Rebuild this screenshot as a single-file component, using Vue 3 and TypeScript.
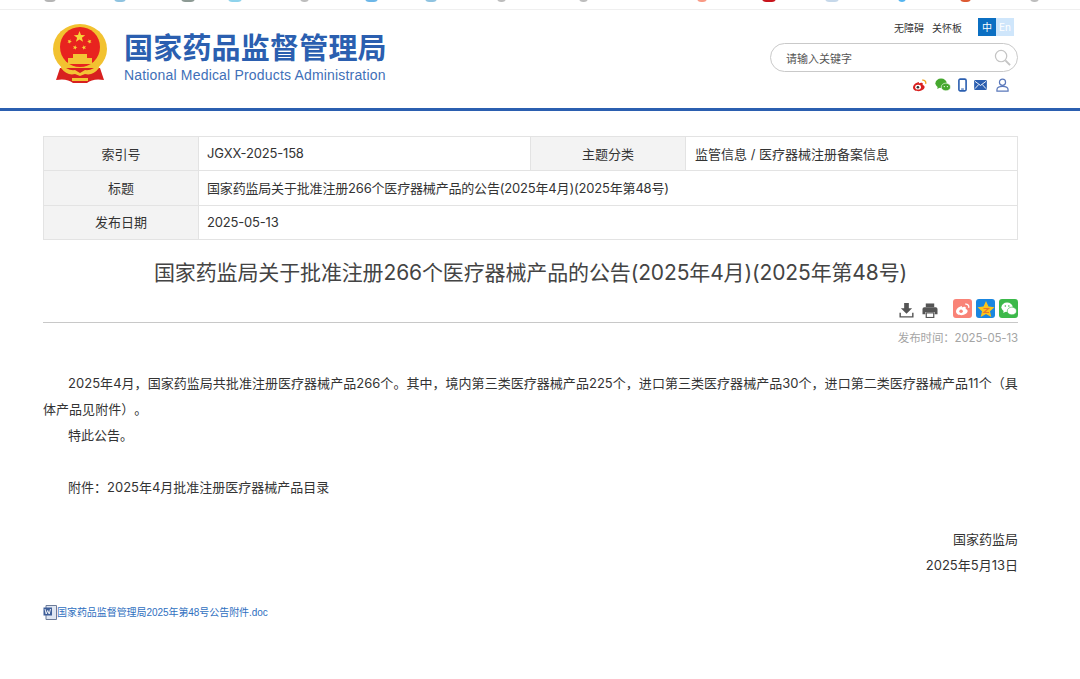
<script setup lang="ts">
const metaRows = [
  { label: '索引号', value: 'JGXX-2025-158', label2: '主题分类', value2: '监管信息 / 医疗器械注册备案信息' },
  { label: '标题', value: '国家药监局关于批准注册266个医疗器械产品的公告(2025年4月)(2025年第48号)' },
  { label: '发布日期', value: '2025-05-13' },
]

// bits of the icon row cut off by the top of the capture
const stripIcons = [
  { x: 44, w: 12, c: '#b5b5b5' }, { x: 114, w: 12, c: '#8fc3e0' }, { x: 181, w: 14, c: '#8d9a94' },
  { x: 228, w: 14, c: '#8fd3ec' }, { x: 300, w: 9, c: '#bdbdbd' }, { x: 365, w: 13, c: '#6db7e8' },
  { x: 425, w: 12, c: '#8fc3e0' }, { x: 497, w: 9, c: '#bdbdbd' }, { x: 579, w: 9, c: '#bdbdbd' },
  { x: 697, w: 10, c: '#f99a85' }, { x: 762, w: 14, c: '#c8141c' }, { x: 825, w: 14, c: '#c6d8ea' },
  { x: 898, w: 8, c: '#55b5f0' }, { x: 960, w: 11, c: '#dd5a33' }, { x: 1030, w: 9, c: '#bdbdbd' },
]

function star(cx: number, cy: number, r: number, rot = 0) {
  const pts: string[] = []
  for (let i = 0; i < 10; i++) {
    const rad = i % 2 ? r * 0.42 : r
    const a = -Math.PI / 2 + rot + (i * Math.PI) / 5
    pts.push(`${(cx + rad * Math.cos(a)).toFixed(2)},${(cy + rad * Math.sin(a)).toFixed(2)}`)
  }
  return pts.join(' ')
}

const emblemStars = [
  star(26.5, 13, 6),
  star(16.5, 17.5, 2.4, 0.4),
  star(36.5, 17.5, 2.4, -0.4),
  star(22, 23.5, 2.4, 0.2),
  star(31, 23.5, 2.4, -0.2),
]
</script>

<template>
  <div class="page">
    <div class="strip">
      <i
        v-for="s in stripIcons"
        :key="s.x"
        class="strip-dot"
        :style="{ left: s.x + 'px', width: s.w + 'px', background: s.c }"
      ></i>
    </div>

    <header class="header">
      <div class="brand">
        <svg class="emblem" viewBox="0 0 54 60" width="54" height="60">
          <ellipse cx="27" cy="25" rx="27" ry="25" fill="#f2c230" />
          <path d="M7 44 L3 56 Q14 54 20 59 L34 59 Q40 54 51 56 L47 44 Z" fill="#d8201f" />
          <circle cx="27" cy="23" r="20" fill="#e8231f" />
          <polygon v-for="p in emblemStars" :key="p" :points="p" fill="#f7d53a" />
          <path d="M20 30 H34 V34 H39 V40 H15 V34 H20 Z" fill="#f3c435" />
          <path d="M9 40 Q14 47 22 46 L27 49 L32 46 Q40 47 45 40 L46 44 Q40 52 32 50 L27 52 L22 50 Q14 52 8 44 Z" fill="#f3c435" />
          <rect x="19" y="54" width="16" height="3" fill="#f3c435" />
        </svg>
        <div class="brand-text">
          <div class="brand-cn">国家药品监督管理局</div>
          <div class="brand-en">National Medical Products Administration</div>
        </div>
      </div>

      <div class="tools">
        <div class="tools-top">
          <span>无障碍</span>
          <span>关怀板</span>
          <div class="lang"><b class="on">中</b><b class="off">En</b></div>
        </div>
        <div class="search">
          <span>请输入关键字</span>
          <svg viewBox="0 0 18 18" width="17" height="17">
            <circle cx="7.5" cy="7.5" r="6" fill="none" stroke="#c4c4c4" stroke-width="1.3" />
            <path d="M12 12 L17 17" stroke="#c4c4c4" stroke-width="2" />
          </svg>
        </div>
        <div class="links">
          <svg viewBox="0 0 18 16" width="16" height="14">
            <path d="M7.500 4.500C3.500 5.500 1 8.500 1 10.800 1 13.500 4 15 7.300 15c3.800 0 7-2 7-4.600 0-1.600-1.500-2-2.300-2.300.5-1.200.3-2.300-1-2.600-1.100-.2-2.400.3-3.300.7.300-1.100-.200-2-.200-1.700z" fill="#d9201f" />
            <ellipse cx="6.800" cy="10.500" rx="3.300" ry="2.700" fill="#fff" />
            <circle cx="6.600" cy="10.600" r="1.500" fill="#333" />
            <path d="M11.500 2.500c2.600-.6 4.800 1.600 4 4.200" fill="none" stroke="#f2a51f" stroke-width="1.500" />
          </svg>
          <svg viewBox="0 0 18 16" width="16" height="14">
            <ellipse cx="6.800" cy="6" rx="6.500" ry="5.300" fill="#46a82f" />
            <path d="M3 9 L2.500 12.500 L6 10.500 Z" fill="#46a82f" />
            <ellipse cx="12.300" cy="10.300" rx="5.300" ry="4.400" fill="#46a82f" stroke="#fff" stroke-width=".7" />
            <circle cx="10.500" cy="9.800" r=".7" fill="#fff" />
            <circle cx="14" cy="9.800" r=".7" fill="#fff" />
          </svg>
          <svg viewBox="0 0 10 15" width="9" height="14">
            <rect x="1" y="1" width="8" height="13" rx="1.500" fill="#fff" stroke="#2b5fb0" stroke-width="1.800" />
            <rect x="3.500" y="11.400" width="3" height="1.200" fill="#2b5fb0" />
          </svg>
          <svg viewBox="0 0 14 11" width="13" height="10">
            <rect width="14" height="11" rx="1.500" fill="#2b5fb0" />
            <path d="M1 1.500 L7 6 L13 1.500 M1 9.500 L5 5 M13 9.500 L9 5" fill="none" stroke="#fff" stroke-width="1" />
          </svg>
          <svg class="user" viewBox="0 0 14 15" width="13" height="14">
            <circle cx="7" cy="4.500" r="3.300" fill="none" stroke="#5a78bb" stroke-width="1.300" />
            <path d="M1 14 H13 V12.500 C13 10 10 9 7 9 C4 9 1 10 1 12.500 Z" fill="none" stroke="#5a78bb" stroke-width="1.300" />
          </svg>
        </div>
      </div>
    </header>

    <main class="main">
      <table class="meta">
        <tbody>
          <tr v-for="row in metaRows" :key="row.label">
            <th>{{ row.label }}</th>
            <td class="val" :colspan="row.label2 ? 1 : 3">{{ row.value }}</td>
            <th v-if="row.label2">{{ row.label2 }}</th>
            <td v-if="row.value2" class="val2">{{ row.value2 }}</td>
          </tr>
        </tbody>
      </table>

      <h1 class="title">国家药监局关于批准注册266个医疗器械产品的公告(2025年4月)(2025年第48号)</h1>

      <div class="share">
        <svg class="ico-dl" viewBox="0 0 16 16" width="15" height="15">
          <path d="M5.500 0 H10.500 V5.500 H14 L8 11.500 L2 5.500 H5.500 Z" fill="#555" />
          <path d="M0.500 10.500 V15.500 H15.500 V10.500 H14 V14 H2 V10.500 Z" fill="#555" />
        </svg>
        <svg class="ico-print" viewBox="0 0 16 16" width="16" height="15">
          <rect x="3.500" y="0.500" width="9" height="4" fill="#555" />
          <path d="M2 4.500 H14 Q16 4.500 16 6.500 V12 H13 V9.500 H3 V12 H0 V6.500 Q0 4.500 2 4.500 Z" fill="#555" />
          <rect x="4" y="10.500" width="8" height="5" fill="none" stroke="#555" stroke-width="1.300" />
        </svg>
        <span class="badge badge-wb">
          <svg viewBox="0 0 18 16" width="16" height="14">
            <path d="M7.500 4.500C3.500 5.500 1 8.500 1 10.800 1 13.500 4 15 7.300 15c3.800 0 7-2 7-4.600 0-1.600-1.500-2-2.300-2.300.5-1.200.3-2.300-1-2.600-1.100-.2-2.400.3-3.300.7.300-1.100-.200-2-.200-1.700z" fill="#fff" />
            <circle cx="6.800" cy="10.500" r="2" fill="#f98377" />
            <path d="M11.500 2.500c2.600-.6 4.800 1.600 4 4.200" fill="none" stroke="#fff" stroke-width="1.500" />
          </svg>
        </span>
        <span class="badge badge-qz">
          <svg viewBox="0 0 18 18" width="18" height="18">
            <polygon points="9,1 11.500,6.500 17.500,7.200 13,11.200 14.300,17 9,14 3.700,17 5,11.200 .5,7.200 6.500,6.500" fill="#fcc419" />
            <path d="M6.500 8.500 H11.500 L7 12.500 H12" fill="none" stroke="#e8772e" stroke-width="1.200" />
          </svg>
        </span>
        <span class="badge badge-wx">
          <svg viewBox="0 0 18 16" width="16" height="14">
            <ellipse cx="6.800" cy="6" rx="6.500" ry="5.300" fill="#fff" />
            <path d="M3 9 L2.500 12.500 L6 10.500 Z" fill="#fff" />
            <ellipse cx="12.300" cy="10.300" rx="5.300" ry="4.400" fill="#fff" stroke="#3cb94a" stroke-width=".7" />
            <circle cx="4.800" cy="4.500" r=".9" fill="#3cb94a" />
            <circle cx="8.800" cy="4.500" r=".9" fill="#3cb94a" />
          </svg>
        </span>
      </div>

      <div class="pubdate">发布时间：2025-05-13</div>

      <article class="body">
        <p class="indent lead">2025年4月，国家药监局共批准注册医疗器械产品266个。其中，境内第三类医疗器械产品225个，进口第三类医疗器械产品30个，进口第二类医疗器械产品11个（具体产品见附件）。</p>
        <p class="indent">特此公告。</p>
        <p class="indent blank-before">附件：2025年4月批准注册医疗器械产品目录</p>
        <p class="right blank-before">国家药监局</p>
        <p class="right">2025年5月13日</p>
      </article>

      <a class="attach" href="#">
        <svg viewBox="0 0 14 15" width="14" height="15">
          <path d="M3 0.500 H13.500 V14.500 H3 Z" fill="#dfe6f2" stroke="#6d7c99" />
          <rect x="0.500" y="2.500" width="8.500" height="8" fill="#3f5f99" />
          <path d="M2 4 L3.200 9 L4.700 5.500 L6.200 9 L7.500 4" fill="none" stroke="#fff" stroke-width=".9" />
        </svg>
        <span>国家药品监督管理局2025年第48号公告附件.doc</span>
      </a>
    </main>
  </div>
</template>

<style scoped>
.page {
  width: 1080px;
  height: 679px;
  overflow: hidden;
  background: #fff;
  font-family: "Inter", "Noto Sans CJK SC", sans-serif;
  color: #333;
  text-spacing-trim: space-all;
}

.strip {
  position: relative;
  height: 9px;
  border-bottom: 1px solid #efefef;
  overflow: hidden;
}
.strip-dot {
  position: absolute;
  top: -4px;
  height: 6px;
  border-radius: 0 0 4px 4px;
}

.header {
  height: 98px;
  border-bottom: 3px solid #2b5fb0;
  display: flex;
  justify-content: space-between;
}
.brand {
  display: flex;
  margin-left: 53px;
  padding-top: 14px;
  gap: 17px;
}
.brand-text {
  padding-top: 5px;
}
.brand-cn {
  font-family: "Noto Sans CJK SC", sans-serif;
  font-size: 29px;
  line-height: 34px;
  font-weight: 700;
  color: #2b5fb0;
  letter-spacing: 0.2px;
}
.brand-en {
  font-family: "Liberation Sans", sans-serif;
  font-size: 14px;
  line-height: 16px;
  margin-top: 4px;
  color: #3f70b8;
  letter-spacing: 0.18px;
}

.tools {
  width: 250px;
  margin-right: 62px;
  display: flex;
  flex-direction: column;
  align-items: flex-end;
}
.tools-top {
  display: flex;
  align-items: center;
  gap: 8px;
  margin-top: 8px;
  margin-right: 4px;
  font-size: 10px;
  color: #333;
  height: 18px;
}
.lang {
  display: flex;
  margin-left: 8px;
}
.lang b {
  width: 18px;
  height: 18px;
  line-height: 18px;
  text-align: center;
  font-size: 10px;
  font-weight: 400;
  color: #fff;
}
.lang .on {
  background: #0b6fc2;
}
.lang .off {
  background: #cfe6fb;
}
.search {
  width: 248px;
  height: 29px;
  box-sizing: border-box;
  margin-top: 7px;
  border: 1px solid #c9c9c9;
  border-radius: 15px;
  display: flex;
  align-items: center;
  justify-content: space-between;
  padding: 0 6px 0 15px;
  font-size: 11px;
  color: #555;
}
.links {
  display: flex;
  align-items: center;
  gap: 7px;
  margin-top: 6px;
  margin-right: 9px;
}
.links .user {
  margin-left: 2px;
}

.main {
  width: 975px;
  margin: 0 0 0 43px;
  padding-top: 25px;
}
.meta {
  width: 975px;
  height: 104px;
  table-layout: fixed;
  border-collapse: collapse;
  font-size: 13px;
}
.meta th,
.meta td {
  padding: 0 0 1px;
  border: 1px solid #e3e3e3;
  font-weight: 400;
  color: #333;
}
.meta th {
  width: 154px;
  background: #f3f3f3;
  text-align: center;
}
.meta td {
  padding-left: 8px;
  background: #fff;
}
.meta .val {
  letter-spacing: -0.18px;
}
.meta .val2 {
  padding-left: 9px;
}

.title {
  margin: 18px 0 0;
  font-size: 21px;
  line-height: 30px;
  font-weight: 400;
  letter-spacing: -0.13px;
  text-align: center;
  color: #444;
}

.share {
  display: flex;
  align-items: flex-end;
  justify-content: flex-end;
  height: 19px;
  margin-top: 11px;
  padding-bottom: 4px;
  gap: 4px;
  border-bottom: 1px solid #c8c8c8;
}
.ico-dl {
  margin-right: 4px;
}
.ico-print {
  margin-right: 11px;
}
.badge {
  width: 19px;
  height: 19px;
  border-radius: 3px;
  display: flex;
  align-items: center;
  justify-content: center;
}
.badge-wb {
  background: #f98377;
}
.badge-qz {
  background: #1a86e0;
}
.badge-wx {
  background: #3cb94a;
}

.pubdate {
  margin-top: 7px;
  text-align: right;
  font-size: 11.5px;
  line-height: 16px;
  letter-spacing: -0.15px;
  color: #a5a5a5;
}

.body {
  margin-top: 24px;
  font-size: 13px;
  line-height: 26px;
  color: #333;
}
.body p {
  margin: 0;
}
.indent {
  text-indent: 25px;
}
.lead {
  letter-spacing: 0.035px;
}
.right {
  text-align: right;
}
.blank-before {
  margin-top: 26px !important;
}

.attach {
  display: flex;
  align-items: center;
  margin-top: 27px;
  font-family: "Liberation Sans", "Noto Sans CJK SC", sans-serif;
  font-size: 10px;
  line-height: 15px;
  letter-spacing: -0.06px;
  color: #2f6fc0;
  text-decoration: none;
}
</style>

<style>
html,
body {
  margin: 0;
  background: #fff;
}
</style>
